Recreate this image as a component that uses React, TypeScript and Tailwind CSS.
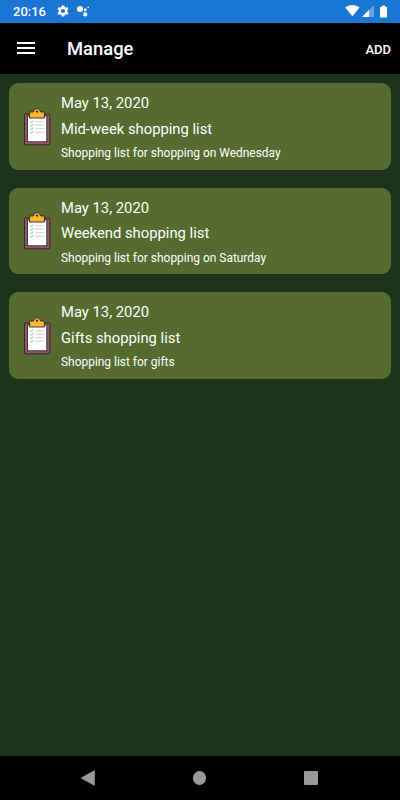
type ShoppingList = {
  id: number;
  date: string;
  title: string;
  description: string;
};

const lists: ShoppingList[] = [
  { id: 1, date: 'May 13, 2020', title: 'Mid-week shopping list', description: 'Shopping list for shopping on Wednesday' },
  { id: 2, date: 'May 13, 2020', title: 'Weekend shopping list', description: 'Shopping list for shopping on Saturday' },
  { id: 3, date: 'May 13, 2020', title: 'Gifts shopping list', description: 'Shopping list for gifts' },
];

function StatusBar() {
  return (
    <div className="flex h-[22.5px] shrink-0 items-center bg-[#1976d2] pl-[13px] pr-3 text-white">
      <span className="w-[33px] text-[13px] font-medium leading-none">20:16</span>
      <svg className="ml-2.5 h-[14px] w-[14px]" viewBox="0 0 24 24" fill="currentColor">
        <path d="M19.14 12.94c.04-.3.06-.61.06-.94s-.02-.64-.07-.94l2.03-1.58a.5.5 0 0 0 .12-.61l-1.92-3.32a.5.5 0 0 0-.59-.22l-2.39.96a7 7 0 0 0-1.62-.94l-.36-2.54a.48.48 0 0 0-.48-.41h-3.84a.48.48 0 0 0-.47.41l-.36 2.54c-.59.24-1.13.57-1.62.94l-2.39-.96a.5.5 0 0 0-.59.22L2.74 8.87a.48.48 0 0 0 .12.61l2.03 1.58a6 6 0 0 0 0 1.88l-2.03 1.58a.5.5 0 0 0-.12.61l1.92 3.32c.12.22.37.29.59.22l2.39-.96c.5.38 1.03.7 1.62.94l.36 2.54c.05.24.24.41.48.41h3.84c.24 0 .44-.17.47-.41l.36-2.54c.59-.24 1.13-.56 1.62-.94l2.39.96c.22.08.47 0 .59-.22l1.92-3.32a.5.5 0 0 0-.12-.61zM12 15.6A3.6 3.6 0 1 1 12 8.4a3.6 3.6 0 0 1 0 7.2z" />
      </svg>
      <svg className="ml-[7px] h-3 w-[13px]" viewBox="0 0 13 12" fill="currentColor">
        <circle cx="3" cy="4" r="3" />
        <circle cx="8.2" cy="4.8" r="1.5" />
        <circle cx="11.2" cy="2.4" r="0.8" />
        <circle cx="8.2" cy="9.4" r="2.1" />
      </svg>
      <svg className="ml-auto h-3 w-[15px]" viewBox="0 0 15 12" fill="currentColor">
        <path d="M0.2 2.6C2.2 1 4.7.1 7.4.1s5.2.9 7.2 2.5L7.4 11.3z" />
      </svg>
      <svg className="ml-0.5 h-3 w-3" viewBox="0 0 12 12" fill="currentColor">
        <path d="M12 0v12H0z" opacity="0.35" />
        <path d="M7 5v7H0z" />
      </svg>
      <svg className="mr-px ml-[6px] h-[13px] w-[7px]" viewBox="0 0 7 13" fill="currentColor">
        <path d="M2 0.5h3v1.2h1.4q.6 0 .6.6v9.6q0 .6-.6.6H.6q-.6 0-.6-.6V2.3q0-.6.6-.6H2z" />
      </svg>
    </div>
  );
}

function Header() {
  return (
    <header className="flex h-[51.5px] shrink-0 items-center bg-black pl-[17px] pr-[9px] text-white">
      <svg className="h-3 w-[18px]" viewBox="0 0 18 12" fill="currentColor">
        <path d="M0 0h18v2H0zM0 5h18v2H0zM0 10h18v2H0z" />
      </svg>
      <h1 className="ml-8 pt-0.5 text-[18.4px] font-medium leading-none">Manage</h1>
      <button className="ml-auto pt-0.5 text-[13px] font-medium leading-none">ADD</button>
    </header>
  );
}

function ClipboardIcon() {
  return (
    <svg className="h-[38px] w-7 shrink-0" viewBox="0 0 28 38">
      <rect x="1.5" y="6" width="25.4" height="30.8" rx="0.6" fill="#965560" stroke="#30282c" />
      <rect x="4.4" y="8" width="19.4" height="25.8" fill="#fff" stroke="#1e1e24" strokeWidth="0.8" />
      <path d="M6.6 10V4.6q0-.6.6-.6h3.3C11.1 1.8 12.3.6 14 .6s2.9 1.2 3.5 3.4h3.3q.6 0 .6.6V10z" fill="#fdb62f" stroke="#2b251d" strokeWidth="0.9" />
      <circle cx="14" cy="3.7" r="1.1" fill="#2b251d" />
      <path d="M7.3 13.6l1.1 1 1.9-2M7.3 17.1l1.1 1 1.9-2M7.3 20.6l1.1 1 1.9-2M7.3 24.1l1.1 1 1.9-2" fill="none" stroke="#3fc380" strokeWidth="0.9" />
      <path d="M12.3 13.7h8.6M12.3 17.2h8.6M12.3 20.7h8.6M12.3 24.2h8.6" stroke="#cfcfdb" strokeWidth="1" />
    </svg>
  );
}

function ListCard({ list }: { list: ShoppingList }) {
  return (
    <article className="flex h-[86.5px] shrink-0 items-center rounded-[9px] bg-[#556b2f] pl-3.5 text-white">
      <ClipboardIcon />
      <div className="ml-2.5 pt-0.5">
        <p className="text-[14.8px] leading-[25.5px]">{list.date}</p>
        <p className="text-[14.8px] leading-[25.5px]">{list.title}</p>
        <p className="text-[11.95px] leading-[22px]">{list.description}</p>
      </div>
    </article>
  );
}

function NavigationBar() {
  return (
    <nav className="flex h-11 shrink-0 items-center justify-between bg-black pl-[81px] pr-[82px] text-[#9a9a9a]">
      <svg className="h-4 w-[14px]" viewBox="0 0 14 16" fill="currentColor">
        <path d="M.4 7.5 13 .4q.8-.2.8.6v14q0 .8-.8.6L.4 8.5q-.6-.5 0-1z" />
      </svg>
      <div className="h-[13.5px] w-[13.5px] rounded-full bg-current" />
      <div className="h-3.5 w-3.5 rounded-[1px] bg-current" />
    </nav>
  );
}

export default function App() {
  return (
    <div className="flex h-[800px] w-[400px] flex-col overflow-hidden bg-[#1c331c] font-[Roboto,sans-serif]">
      <StatusBar />
      <Header />
      <main className="flex flex-1 flex-col gap-[18px] px-[9px] pt-[9.3px]">
        {lists.map((list) => (
          <ListCard key={list.id} list={list} />
        ))}
      </main>
      <NavigationBar />
    </div>
  );
}
